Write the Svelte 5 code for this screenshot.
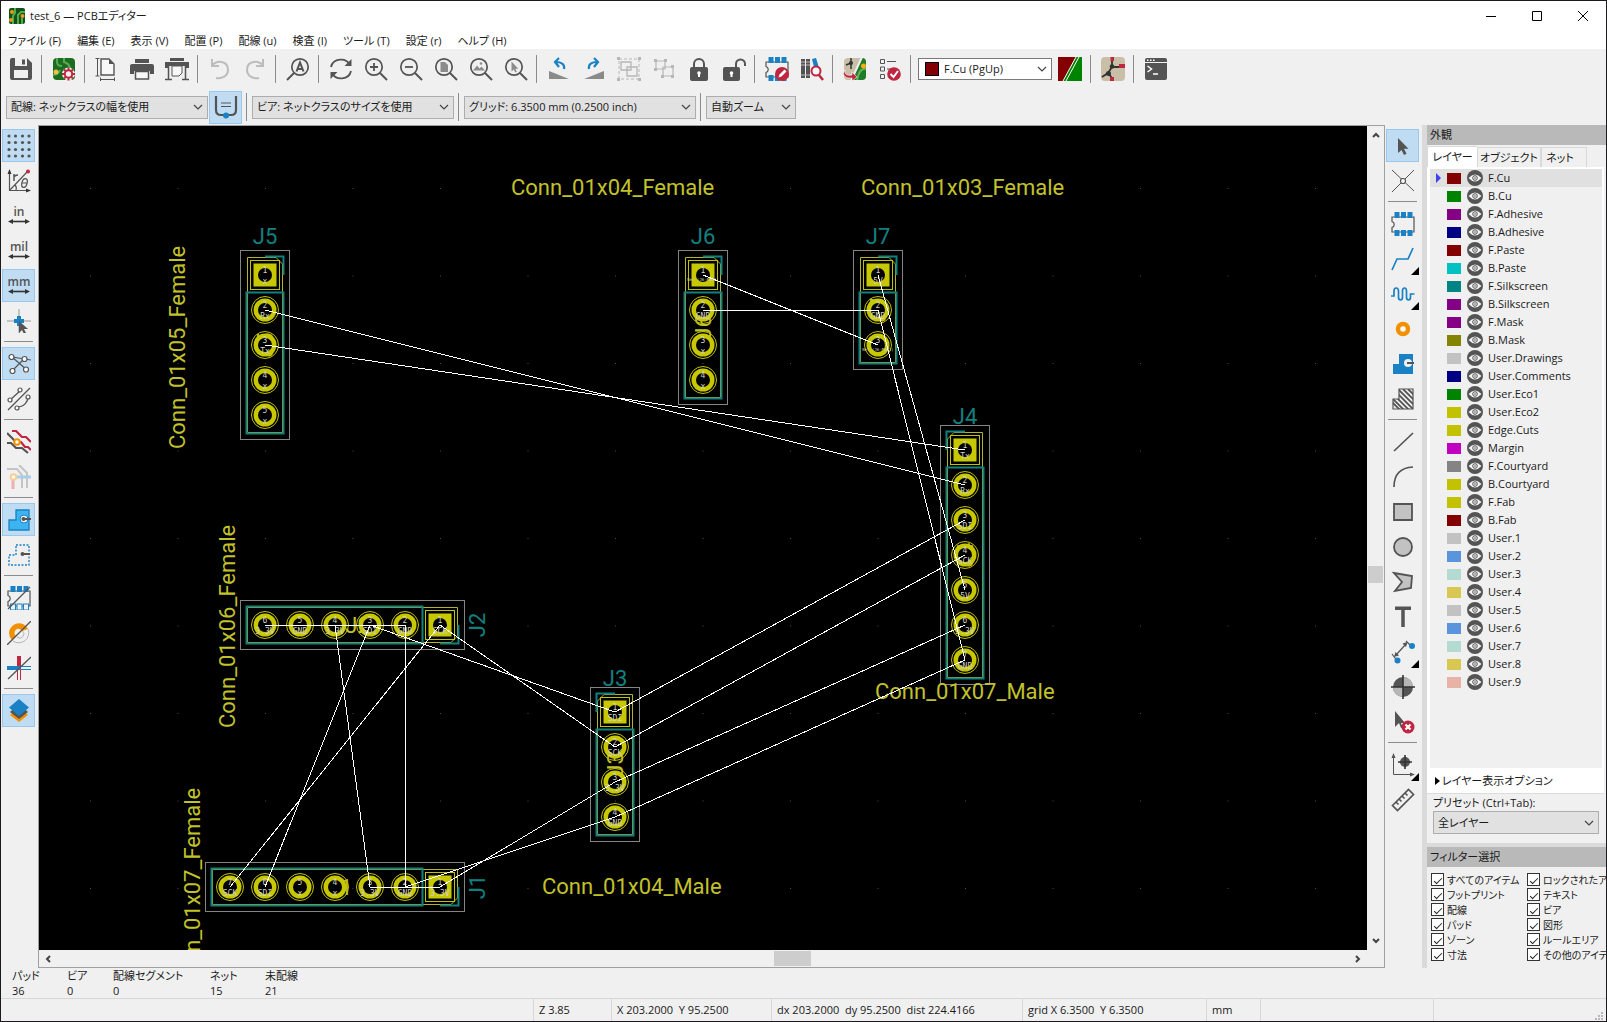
<script>
  const D = '#545454';
  const B = '#1a81c4';
  const R = '#bf2641';
  const O = '#f29100';
  const G = '#b6b6b6';

  const lens = `<circle cx="10" cy="10" r="8.2" fill="none" stroke="${D}" stroke-width="1.7"/><path d="M16 16l7 7" stroke="${D}" stroke-width="2"/>`;
  const chip = (y1, y2, hollow) =>
    `<path d="M1 5h22v15H1v-4.500c3-1 3-5 0-6z" fill="none" stroke="${D}" stroke-width="1.200"/>` +
    [3.5, 10, 16.5].map((x) => `<rect x="${x}" y="${y1}" width="5" height="6" fill="${B}"/><rect x="${x}" y="${y2}" width="5" height="6" fill="${hollow ? '#f0f0f0' : B}" stroke="${B}" stroke-width="${hollow ? 1 : 0}"/>`).join('');
  const unit = (t) => `<text x="12" y="12" text-anchor="middle" font-family="Open Sans, sans-serif" font-weight="600" font-size="12" fill="${D}">${t}</text><path d="M4 17.500h16" stroke="#333" stroke-width="1.600"/><path d="M1 17.500l5-2.500v5zM23 17.500l-5-2.500v5z" fill="#333"/>`;
  const boardBase = `<clipPath id="rb"><rect x="1" y="1" width="22" height="22" rx="4"/></clipPath>`;

  const icons = {
    save: `<path d="M1 3a2 2 0 0 1 2-2h15l5 5v15a2 2 0 0 1-2 2H3a2 2 0 0 1-2-2z" fill="${D}"/><path d="M6 1h12v8H6zM5 13h14v8H5z" fill="#f0f0f0"/><path d="M13 2.500h3v5h-3z" fill="${D}"/>`,
    setup: `${boardBase}<g clip-path="url(#rb)"><path d="M1 1h22v22H1z" fill="#1b6e20"/><path d="M5 0v5q0 4 5 4M12 0v5q6 2 6 7M1 18q5 0 7-5" stroke="#5aa854" stroke-width="2" fill="none"/><circle cx="4" cy="15" r="2.500" fill="#f2c040"/></g><circle cx="16.500" cy="17" r="6.500" fill="#f0f0f0"/><circle cx="16.500" cy="17" r="3.700" fill="none" stroke="${R}" stroke-width="2"/><path d="M16.500 10.500v3M16.500 20.500v3M10 17h3M20 17h3M12 12.500l2 2M19 19.500l2 2M21 12.500l-2 2M12 21.500l2-2" stroke="${R}" stroke-width="2"/>`,
    page: `<path d="M6 2h8l5 5v11H6z" fill="#f8f8f8" stroke="${D}" stroke-width="1.400"/><path d="M14 2v5h5z" fill="${D}"/><path d="M2.500 1v18M.500 1.500h4M.500 19h4M5 22.500h15M5.500 20.500v4M19.500 20.500v4" stroke="${D}" fill="none"/>`,
    print: `<path d="M5 2h14v4H5z" fill="${D}"/><path d="M0 9a2 2 0 0 1 2-2h20a2 2 0 0 1 2 2v8h-4v-3H4v3H0z" fill="${D}"/><path d="M5.500 14.500h13V22h-13z" fill="#f8f8f8" stroke="${D}" stroke-width="1.500"/>`,
    plot: `<path d="M5 1h14v3H5z" fill="${D}"/><path d="M0 5h24v6h-3V9H3v2H0z" fill="${D}"/><path d="M7 9h10v7l-3 3H7z" fill="#f8f8f8" stroke="${D}"/><path d="M3.500 9v13M20.500 9v13M0 22.500h7M17 22.500h7" stroke="${D}" stroke-width="1.500"/>`,
    undo: `<path d="M4 2v7h7M4 9C8 3 20 3 20 13c0 6-6 9-12 8" fill="none" stroke="#bcbcbc" stroke-width="2"/>`,
    redo: `<path d="M20 2v7h-7M20 9C16 3 4 3 4 13c0 6 6 9 12 8" fill="none" stroke="#bcbcbc" stroke-width="2"/>`,
    find: `<circle cx="14" cy="10" r="8.200" fill="none" stroke="${D}" stroke-width="1.700"/><path d="M8 16l-7 7" stroke="${D}" stroke-width="2"/><path d="M10.500 14.500L14 5.500l3.500 9M12 12h4" fill="none" stroke="${D}" stroke-width="2"/>`,
    refresh: `<path d="M2 10C4 1 17 0 21 8M22 14C20 23 7 24 3 16" fill="none" stroke="${D}" stroke-width="1.800"/><path d="M22.500 2v7h-7zM1.500 22v-7h7z" fill="${D}"/>`,
    zoomIn: `${lens}<path d="M10 6v8M6 10h8" stroke="${D}" stroke-width="1.800"/>`,
    zoomOut: `${lens}<path d="M6 10h8" stroke="${D}" stroke-width="1.800"/>`,
    zoomPage: `${lens}<path d="M6.500 5h4.500l3 3v7H6.500z" fill="#8c8c8c"/>`,
    zoomObjects: `${lens}<path d="M4 13.500l4-5 2.500 3 2-2 3.500 4z" fill="#8c8c8c"/><circle cx="12" cy="6.500" r="1.300" fill="#8c8c8c"/>`,
    zoomSelect: `${lens}<path d="M7.500 4.500v10l2.300-2 1.500 3 1.500-.700-1.400-3h3z" fill="#8c8c8c"/>`,
    rotL: `<path d="M2 14l20 8H2z" fill="#8a8a8a"/><path d="M17 12c1-5-3-7-8-7M12 1L8 5l4 5" fill="none" stroke="${B}" stroke-width="2.200"/>`,
    rotR: `<path d="M22 14L2 22h20z" fill="#8a8a8a"/><path d="M7 12c-1-5 3-7 8-7M12 1l4 4-4 5" fill="none" stroke="${B}" stroke-width="2.200"/>`,
    group: `<path d="M2 2h20v20H2z" fill="none" stroke="${G}" stroke-dasharray="3 2"/><path d="M4 5h10v8H4zM10 10h10v9H10z" fill="#f0f0f0" stroke="${G}" stroke-width="1.300"/><path d="M0 0h3v3H0zM21 0h3v3h-3zM0 21h3v3H0zM21 21h3v3h-3z" fill="${G}"/>`,
    ungroup: `<path d="M4 4h9v8H4zM11 10h10v9H11z" fill="#f0f0f0" stroke="${G}" stroke-width="1.200"/><path d="M2 2h3v3H2zM12 2h3v3h-3zM2 11h3v3H2zM19 8h3v3h-3zM9 18h3v3H9zM19 18h3v3h-3z" fill="${G}"/>`,
    lock: `<rect x="3" y="10" width="18" height="14" rx="2" fill="${D}"/><path d="M7 11V7a5 5 0 0 1 10 0v4" fill="none" stroke="${D}" stroke-width="2"/><circle cx="12" cy="16" r="1.800" fill="#fff"/><path d="M11 17h2v3h-2z" fill="#fff"/>`,
    unlock: `<rect x="1" y="10" width="17" height="14" rx="2" fill="${D}"/><path d="M14 11V7a4.500 4.500 0 0 1 9 0v2" fill="none" stroke="${D}" stroke-width="2"/><circle cx="9.500" cy="16" r="1.800" fill="#fff"/><path d="M8.500 17h2v3h-2z" fill="#fff"/>`,
    fpEdit: `${chip(0, 18, false)}<circle cx="17" cy="17" r="7" fill="${R}"/><path d="M13.500 20.500l1-3 5-5 2 2-5 5z" fill="#fff"/>`,
    library: `<path d="M1 2h4v19H1zM6 2h4v19H6z" fill="${D}"/><path d="M1 5h4M1 8h4M6 5h4M6 8h4M1 18h9" stroke="#bbb"/><path d="M12 2l4-1 4 13-4 4z" fill="${B}"/><circle cx="16" cy="14" r="4.500" fill="#f8f8f8" stroke="${R}" stroke-width="2"/><path d="M19 18l4 5" stroke="${R}" stroke-width="2.500"/>`,
    update: `${boardBase}<g clip-path="url(#rb)"><path d="M0 0h24v24H0z" fill="#c9bfa7"/><path d="M20 0h4v24H8z" fill="#1f7d28"/><path d="M19 0L8 24" stroke="#f0f0f0" stroke-width="2"/><path d="M8 0v6M8 6L3 8M8 6v6" stroke="#333" stroke-width="1.500"/><circle cx="8" cy="6" r="2" fill="#333"/><path d="M14 24q2-14 10-12" stroke="#68b060" stroke-width="2" fill="none"/><circle cx="20.500" cy="9" r="2.500" fill="#f2b010"/></g><path d="M2 13c-1 4 2 6 7 5v-3l5 5-5 4v-3C3 22-2 18 2 13z" fill="${R}" stroke="#fff" stroke-width=".6"/>`,
    drc: `<path d="M2.500 2.500h4v4h-4zM2.500 10h4v4h-4zM2.500 17.500h4v4h-4z" fill="none" stroke="${D}"/><path d="M9 4.500h9M9 12h4" stroke="${D}" stroke-width="1.200"/><circle cx="16" cy="17" r="6.800" fill="${R}"/><path d="M12.500 17l3 3 4.500-6" fill="none" stroke="#fff" stroke-width="2"/>`,
    pair: `<path d="M0 0h24v24H0z" fill="#008400"/><path d="M0 0h18L5 24H0z" fill="#840000"/><path d="M18 0L5 24M21 0L8 24" stroke="#fff"/>`,
    schematic: `<rect width="24" height="24" rx="4" fill="#c9bfa7"/><path d="M11 2v8M1 20l6-4 4-6h8M7 16l4 5" fill="none" stroke="#333" stroke-width="1.800"/><circle cx="11" cy="9.500" r="2.300" fill="#333"/><circle cx="7.500" cy="16.500" r="2.500" fill="#333"/><path d="M9.500 0h3.500v4H9.500zM18 7h6v4h-6zM9 20h4v4H9z" fill="${R}"/>`,
    console: `<rect x="1" y="1" width="22" height="22" rx="2" fill="${D}"/><path d="M1 5.500h22" stroke="#f0f0f0"/><path d="M3 3.200h1.500M6 3.200h1.500M9 3.200h1.500" stroke="#fff" stroke-width="1.500"/><path d="M3.500 9l4 3-4 3M9 17h5" fill="none" stroke="#fff" stroke-width="1.500"/>`,
    autoWidth: `<path d="M2 1v14q0 5 5 5h10q5 0 5-5V1" fill="none" stroke="${D}" stroke-width="2.200"/><path d="M7 8h10M7 11.500h10" stroke="${D}" stroke-width="1.200"/><circle cx="12" cy="20.500" r="3" fill="${B}"/>`,
    grid: [2, 8.500, 15.500, 22].map((y) => [2, 8.500, 15.500, 22].map((x) => `<circle cx="${x}" cy="${y}" r="1.600" fill="${D}"/>`).join('')).join(''),
    polar: `<path d="M2.500 2v19.500H22M2.500 21.500L20 3M8 16q2 2 1 5" fill="none" stroke="${D}" stroke-width="1.200"/><path d="M2.500 0L.500 5h4zM24 21.500l-5-2v4z" fill="#333"/><circle cx="21" cy="2.500" r="2" fill="${R}"/><path d="M7 5v7M7 8q1-2 4-2" stroke="${D}" stroke-width="1.500" fill="none"/><ellipse cx="17.500" cy="14" rx="2.600" ry="4.500" transform="rotate(15 17.500 14)" fill="none" stroke="${D}" stroke-width="1.300"/><path d="M15 14h5" stroke="${D}"/>`,
    inch: unit('in'),
    mil: unit('mil'),
    mm: unit('mm'),
    cursor: `<path d="M12 0v24M0 12h24" stroke="#999"/><path d="M10 7h4v3h3v4h-3v3h-4v-3H7v-4h3z" fill="${B}"/><path d="M12 12v12l3-3 2 4 2-1-2-4h4z" fill="${D}"/>`,
    rats: `<path d="M5 5l15 13M5 19L17 7M5 5l19 3" stroke="${D}" stroke-width="1.200"/><g fill="#fff" stroke="${D}" stroke-width="1.200"><circle cx="4.500" cy="5" r="2.500"/><circle cx="17.500" cy="7" r="2.500"/><circle cx="5.500" cy="19" r="2.500"/><circle cx="19" cy="17.500" r="2.500"/></g>`,
    curved: `<path d="M1 23L23 1M3 13l10-9M10 20c7 0 11-5 11-10" stroke="${D}" fill="none" stroke-width="1.300"/><g fill="#fff" stroke="${D}" stroke-width="1.200"><circle cx="3" cy="13" r="2"/><circle cx="13" cy="3" r="2"/><circle cx="10" cy="21" r="2"/><circle cx="21" cy="10" r="2"/></g>`,
    tracks: `<path d="M5 1h4l6 6h4l5 5M10 12h4l4 5h3l3 3" stroke="${R}" stroke-width="2.200" fill="none"/><path d="M0 3l8 8M0 13h4l5 5h6l6 5" stroke="${D}" stroke-width="2.200" fill="none"/><circle cx="10" cy="12" r="2.800" fill="#fff" stroke="${O}" stroke-width="2"/>`,
    tracksDim: `<path d="M0 4h7M12 0l8 8v15M6 4h4l5 6v13" fill="none" stroke="#c4c4c4" stroke-width="2"/><path d="M6 12v12" stroke="#eab0b8" stroke-width="3"/><path d="M9 12h15" stroke="#a9cde6" stroke-width="3"/><circle cx="6.500" cy="12" r="2.800" fill="#fff" stroke="#f8cf92" stroke-width="2"/>`,
    zoneFill: `<path d="M9 2h13v20H2V12h7z" fill="#3cb4f0" stroke="${B}" stroke-width="1.300"/><circle cx="17" cy="11" r="4" fill="#f0f0f0" stroke="${B}"/><path d="M16 11h8" stroke="${D}" stroke-width="2"/><circle cx="16.500" cy="11" r="2" fill="${D}"/>`,
    zoneLine: `<path d="M9 2h13v20H2V12h7z" fill="none" stroke="${B}" stroke-width="1.400" stroke-dasharray="2 1.500"/><path d="M16 11h7" stroke="${D}" stroke-width="2"/><circle cx="15.500" cy="11" r="2" fill="${D}"/>`,
    fpOutline: `${chip(0, 18, true)}<path d="M1 23L23 1" stroke="${D}" stroke-width="1.300"/>`,
    viaOutline: `<path d="M2 12a10 10 0 0 1 19-4L15 10a4 4 0 1 0-6 5l-4 4a10 10 0 0 1-3-7z" fill="${O}"/><path d="M21 8A10 10 0 0 1 6 20M15.500 10A4 4 0 0 1 10 16" stroke="${G}" fill="none"/><path d="M0 24L24 0" stroke="${D}" stroke-width="1.300"/>`,
    trackOutline: `<path d="M12 0v12" stroke="${R}" stroke-width="4"/><path d="M10.500 12v12M13.500 12v12" stroke="${R}"/><path d="M0 12h12" stroke="${B}" stroke-width="4"/><path d="M12 10.500h12M12 13.500h12" stroke="${B}"/><path d="M1 23L24 1" stroke="${D}" stroke-width="1.300"/>`,
    layers: `<path d="M12 8l9 8-9 7-9-7z" fill="${O}"/><path d="M12 5l9 8-9 7-9-7z" fill="${D}"/><path d="M12 0l10 8.500-10 8.500L2 8.500z" fill="${B}"/>`,
    select: `<path d="M7 4v15l3.500-3 2.500 5 2.500-1.200-2.500-5h4.500z" fill="${D}"/>`,
    ratLocal: `<path d="M1 1l22 21M23 1L1 23" stroke="${D}"/><circle cx="12" cy="12" r="2.500" fill="#fff" stroke="${D}" stroke-width="1.200"/>`,
    footprint: chip(0, 18, false),
    route: `<path d="M1 23l5-11h11l5-11" fill="none" stroke="${B}" stroke-width="1.700"/>`,
    tune: `<path d="M0 14h3V9q0-3 2.200-3T7.500 9v6q0 3 2 3t2-3V9q0-3 2-3t2 3v6q0 3 2 3t2-3v-3h4" fill="none" stroke="${B}" stroke-width="1.700"/>`,
    via: `<circle cx="12" cy="12" r="5" fill="#fff" stroke="${O}" stroke-width="4.500"/>`,
    zone: `<path d="M8 2h14v20H2V12h6z" fill="${B}"/><circle cx="17" cy="11" r="4" fill="#f0f0f0"/><path d="M16 11h7" stroke="${D}" stroke-width="2"/>`,
    ruleArea: `<clipPath id="ra"><path d="M8 2h14v20H2V12h6z"/></clipPath><path clip-path="url(#ra)" d="M-8 2l22 22M-3 2l22 22M2 2l22 22M7 2l18 18M12 2l12 12M17 2l7 7M-12 2l22 22" stroke="${D}" stroke-width="1.800"/><path d="M8 2h14v20H2V12h6z" fill="none" stroke="${D}" stroke-width="1.200"/>`,
    line: `<path d="M3 21L22 3" stroke="${D}" stroke-width="1.700"/>`,
    arc: `<path d="M3 22Q3 3 22 2" fill="none" stroke="${D}" stroke-width="1.700"/>`,
    rect: `<path d="M3 4h18v16H3z" fill="#c2c2c2" stroke="${D}" stroke-width="1.800"/>`,
    circle: `<circle cx="12" cy="12" r="9" fill="#c2c2c2" stroke="${D}" stroke-width="1.800"/>`,
    polygon: `<path d="M3 3l18 3-1 12-16 3 7-9z" fill="#c2c2c2" stroke="${D}" stroke-width="1.800"/>`,
    text: `<path d="M4 3.200h16M12 3.200V22" fill="none" stroke="${D}" stroke-width="3.500"/>`,
    dimension: `<path d="M1 14l6 8M15 1l6 6M5 15L15 4" stroke="${D}" stroke-width="1.200"/><path d="M3 17l1.500-5 3.500 3.500zM16.500 2l-5 1.500L15 7z" fill="${D}"/><circle cx="6.500" cy="20.500" r="3" fill="${B}"/><circle cx="21" cy="6" r="3" fill="${B}"/>`,
    origin: `<circle cx="12" cy="12" r="10" fill="${D}"/><path d="M12 2a10 10 0 0 1 10 10H12zM12 22A10 10 0 0 1 2 12h10z" fill="${G}"/><path d="M12 0v24M0 12h24" stroke="#333" stroke-width="1.600"/>`,
    erase: `<path d="M4 1v16l4-4 2 5h2l-2-5h4z" fill="${D}"/><circle cx="17" cy="17" r="6.500" fill="${R}"/><path d="M14.500 14.500l5 5M19.500 14.500l-5 5" stroke="#fff" stroke-width="2.200"/>`,
    gridOrigin: `<path d="M2.500 3v18.500H22" fill="none" stroke="${D}"/><path d="M2.500 0l-2 5h4zM24 21.500l-5-2v4z" fill="${D}"/><circle cx="14" cy="9" r="5" fill="${D}"/><path d="M14 2v14M7 9h14" stroke="#333" stroke-width="1.600"/>`,
    measure: `<path d="M1.500 17.500L17.500 1.500l5 5L6.500 22.500zM5 14l2.500 2.500M8 11l2.500 2.500M11 8l2.500 2.500M14 5l2.500 2.500" fill="none" stroke="${D}" stroke-width="1.700"/>`
  };

  const menus = ['ファイル (F)', '編集 (E)', '表示 (V)', '配置 (P)', '配線 (u)', '検査 (I)', 'ツール (T)', '設定 (r)', 'ヘルプ (H)'];
  const mainTools = [
    ['save'], ['setup'], ['page', 'print', 'plot'], ['undo', 'redo'], ['find'],
    ['refresh', 'zoomIn', 'zoomOut', 'zoomPage', 'zoomObjects', 'zoomSelect'],
    ['rotL', 'rotR', 'group', 'ungroup', 'lock', 'unlock'],
    ['fpEdit', 'library'], ['update', 'drc']
  ];
  const leftTools = [
    ['grid', 'polar', 'inch', 'mil', 'mm', 'cursor'], ['rats', 'curved'], ['tracks', 'tracksDim'],
    ['zoneFill', 'zoneLine'], ['fpOutline', 'viaOutline', 'trackOutline'], ['layers']
  ];
  const rightTools = [
    ['select', 'ratLocal'], ['footprint', 'route', 'tune', 'via', 'zone', 'ruleArea'],
    ['line', 'arc', 'rect', 'circle', 'polygon', 'text', 'dimension', 'origin', 'erase'],
    ['gridOrigin', 'measure']
  ];
  const pressed = ['grid', 'mm', 'rats', 'zoneFill', 'layers', 'select', 'autoWidth'];
  const flyout = ['route', 'tune', 'dimension', 'gridOrigin'];

  const layers = [
    ['F.Cu', '#840000'], ['B.Cu', '#008400'], ['F.Adhesive', '#840084'], ['B.Adhesive', '#000084'],
    ['F.Paste', '#840000'], ['B.Paste', '#00c2c2'], ['F.Silkscreen', '#008484'], ['B.Silkscreen', '#840084'],
    ['F.Mask', '#840084'], ['B.Mask', '#848400'], ['User.Drawings', '#c2c2c2'], ['User.Comments', '#000084'],
    ['User.Eco1', '#008400'], ['User.Eco2', '#c2c200'], ['Edge.Cuts', '#c2c200'], ['Margin', '#c200c2'],
    ['F.Courtyard', '#848484'], ['B.Courtyard', '#c2c200'], ['F.Fab', '#c2c200'], ['B.Fab', '#840000'],
    ['User.1', '#c2c2c2'], ['User.2', '#5994dc'], ['User.3', '#b4dbd2'], ['User.4', '#d8c852'],
    ['User.5', '#c2c2c2'], ['User.6', '#5994dc'], ['User.7', '#b4dbd2'], ['User.8', '#d8c852'], ['User.9', '#e8b2a7']
  ];
  const filters = [
    'すべてのアイテム', 'ロックされたアイテム', 'フットプリント', 'テキスト', '配線', 'ビア',
    'パッド', '図形', 'ゾーン', 'ルールエリア', '寸法', 'その他のアイテム'
  ];
  const counts = [['パッド', 36], ['ビア', 0], ['配線セグメント', 0], ['ネット', 15], ['未配線', 21]];
  const status = ['', 'Z 3.85', 'X 203.2000  Y 95.2500', 'dx 203.2000  dy 95.2500  dist 224.4166', 'grid X 6.3500  Y 6.3500', 'mm', '', ''];

  // Board drawing: pin pitch and connector origins are in canvas units.
  const P = 35;
  const parts = [
    { ref: 'J5', x: 226, y: 149, nets: ['x', 'Rx', 'Tx', 'x', 'x'] },
    { ref: 'J6', x: 664, y: 149, nets: ['Net-(J6-Pad1)', 'GND', 'x', 'x'] },
    { ref: 'J7', x: 839, y: 149, nets: ['5V', 'GND', 'Net-(J6-Pad1)'] },
    { ref: 'J4', x: 926, y: 324, male: true, nets: ['Tx', 'Rx', 'SDI', 'SCK', '5V', '3.3V', 'GND'] },
    { ref: 'J3', x: 576, y: 586, male: true, nets: ['SDI', 'SCK', '3.3V', 'GND'] },
    { ref: 'J2', x: 401, y: 499, flat: true, nets: ['SCK', 'GND', 'SDI', '3.3V', 'GND', '3.3V'] },
    { ref: 'J1', x: 401, y: 761, flat: true, nets: ['3.3V', 'GND', '3.3V', 'x', 'x', 'SDI', 'SCK'] }
  ];
  const values = [
    ['Conn_01x04_Female', 472, 69, 0], ['Conn_01x03_Female', 822, 69, 0],
    ['Conn_01x05_Female', 146, 323, -90], ['Conn_01x06_Female', 196, 602, -90],
    ['Conn_01x07_Female', 161, 865, -90], ['Conn_01x04_Male', 503, 768, 0], ['Conn_01x07_Male', 836, 573, 0]
  ];
  const rats = [
    'J5.2 J4.2', 'J5.3 J4.1', 'J6.1 J7.3', 'J6.2 J7.2', 'J7.1 J4.5', 'J7.2 J4.7', 'J3.1 J4.3', 'J3.2 J4.4',
    'J3.3 J4.6', 'J3.4 J4.7', 'J2.1 J3.2', 'J2.3 J3.1', 'J2.1 J1.7', 'J2.3 J1.6', 'J2.4 J1.3', 'J2.2 J1.2',
    'J2.2 J2.6', 'J1.3 J1.1', 'J1.2 J3.4', 'J1.1 J3.3'
  ];
  const pin = (name) => {
    const [ref, n] = name.split('.');
    const c = parts.find((p) => p.ref === ref);
    const d = (n - 1) * P;
    return c.flat ? [c.x - d, c.y] : [c.x, c.y + d];
  };
  const ratLines = rats.map((r) => r.split(' ').flatMap(pin));
</script>

{#snippet tool(name)}
  <button class="tool" class:on={pressed.includes(name)} class:fly={flyout.includes(name)} aria-label={name}>
    <svg width="24" height="24" viewBox="0 0 24 24">{@html icons[name]}</svg>
  </button>
{/snippet}

{#snippet combo(label, text, cls)}
  <div class="combo {cls}">
    <select aria-label={label}><option>{text}</option></select>
    <svg width="10" height="6" viewBox="0 0 10 6"><path d="M1 1l4 4 4-4" fill="none" stroke="#444" stroke-width="1.200" /></svg>
  </div>
{/snippet}

<div class="window">
  <header class="title">
    <svg width="16" height="16" viewBox="0 0 16 16">
      <rect width="16" height="16" rx="2" fill="#15501c" />
      <path d="M6 0v5l-2 3v8M16 4h-4L9 7v9M13 16v-6" stroke="#4fae4a" stroke-width="2" fill="none" />
      <circle cx="3" cy="4" r="2" fill="#e89a1c" /><circle cx="13.500" cy="8" r="2" fill="#e89a1c" /><circle cx="2" cy="12" r="2" fill="#e89a1c" />
    </svg>
    <h1>test_6 — PCBエディター</h1>
    <button class="win" aria-label="minimize"><svg width="10" height="10"><path d="M0 5.500h10" stroke="#000" /></svg></button>
    <button class="win" aria-label="maximize"><svg width="10" height="10"><path d="M.500.500h9v9h-9z" fill="none" stroke="#000" /></svg></button>
    <button class="win" aria-label="close"><svg width="10" height="10"><path d="M0 0l10 10M10 0L0 10" stroke="#000" /></svg></button>
  </header>

  <nav class="menu">
    {#each menus as m}<button>{m}</button>{/each}
  </nav>

  <div class="bar">
    {#each mainTools as group}
      {#each group as name}{@render tool(name)}{/each}
      <span class="sep"></span>
    {/each}
    <div class="layer-pick">
      {@render combo('layer', 'F.Cu (PgUp)', 'layer')}
      <span class="chip"></span>
    </div>
    {@render tool('pair')}
    <span class="sep"></span>
    {@render tool('schematic')}
    <span class="sep"></span>
    {@render tool('console')}
  </div>

  <div class="bar second">
    {@render combo('track width', '配線: ネットクラスの幅を使用', 'wide')}
    {@render tool('autoWidth')}
    <span class="sep"></span>
    {@render combo('via size', 'ビア: ネットクラスのサイズを使用', 'wide')}
    <span class="sep"></span>
    {@render combo('grid', 'グリッド: 6.3500 mm (0.2500 inch)', 'grid')}
    <span class="sep"></span>
    {@render combo('zoom', '自動ズーム', 'zoom')}
  </div>

  <main>
    <div class="side">
      {#each leftTools as group, i}
        {#if i}<span class="hsep"></span>{/if}
        {#each group as name}{@render tool(name)}{/each}
      {/each}
    </div>

    <div class="view">
      <svg class="board" width="100%" height="100%">
        <defs>
          <pattern id="dots" x="51" y="62" width="87.5" height="87.5" patternUnits="userSpaceOnUse">
            <rect width="1" height="1" fill="#4a4a4a" />
          </pattern>
        </defs>
        <rect width="100%" height="100%" fill="url(#dots)" />
        {#each parts as c}
          {@const n = c.nets.length}
          {@const end = (n - 1) * P}
          <g transform="translate({c.x} {c.y}) rotate({c.flat ? 90 : 0})" fill="none">
            <rect x="-24.500" y="-24.500" width="49" height={end + 49} stroke="#848484" shape-rendering="crispEdges" />
            <g transform="scale({c.male ? -1 : 1} 1)">
              <path d="M-17.500 {end + 17.500}V-17.500H11L17.500-11V{end + 17.500}z" stroke="#b4b428" />
              <path d="M-18.500 17.500h37V{end + 18.500}h-37zM0-18.500h18.500V0" stroke="#138080" stroke-width="2" />
            </g>
            <rect x="-14.500" y="-14.500" width="29" height="29" stroke="#c2c200" />
          </g>
          <text
            class="fabref"
            transform="translate({c.flat ? c.x - end / 2 + 5 : c.x + 8} {c.flat ? c.y + 8 : c.y + end / 2}) rotate({c.flat ? 0 : -90})"
            >{c.ref}</text
          >
          {#each c.nets as net, i}
            {@const px = c.flat ? c.x - i * P : c.x}
            {@const py = c.flat ? c.y : c.y + i * P}
            {#if i === 0}
              <rect x={px - 11.5} y={py - 11.5} width="23" height="23" fill="#c8c800" />
            {:else}
              <circle cx={px} cy={py} r="13.500" fill="none" stroke="#c2c200" />
              <circle cx={px} cy={py} r="11.500" fill="#c8c800" />
            {/if}
            <circle cx={px} cy={py} r="7" fill="#000" />
            <text class="pad" x={px} y={py - 2}>{i + 1}</text>
            <text class="pad" class:long={net.length > 5} x={px} y={py + (net.length > 5 ? 6 : 9)}>{net}</text>
          {/each}
          <text
            class="ref"
            transform="translate({c.flat ? c.x + 45 : c.x} {c.flat ? c.y : c.y - (c.male ? 26 : 31)}) rotate({c.flat ? -90 : 0})"
            >{c.ref}</text
          >
        {/each}
        {#each values as [t, x, y, a]}
          <text class="value" transform="translate({x} {y}) rotate({a})">{t}</text>
        {/each}
        {#each ratLines as [x1, y1, x2, y2]}
          <line {x1} {y1} {x2} {y2} stroke="#fff" shape-rendering="crispEdges" />
        {/each}
      </svg>
      <div class="scroll v">
        <svg width="8" height="6"><path d="M1 5l3-3 3 3" fill="none" stroke="#444" stroke-width="2" /></svg>
        <i class="thumb"></i>
        <svg width="8" height="6"><path d="M1 1l3 3 3-3" fill="none" stroke="#444" stroke-width="2" /></svg>
      </div>
      <div class="scroll h">
        <svg width="6" height="8"><path d="M5 1L2 4l3 3" fill="none" stroke="#444" stroke-width="2" /></svg>
        <i class="thumb"></i>
        <svg width="6" height="8"><path d="M1 1l3 3-3 3" fill="none" stroke="#444" stroke-width="2" /></svg>
      </div>
    </div>

    <div class="side">
      {#each rightTools as group, i}
        {#if i}<span class="hsep"></span>{/if}
        {#each group as name}{@render tool(name)}{/each}
      {/each}
    </div>

    <aside>
      <h2>外観</h2>
      <div class="tabs">
        <button class="active">レイヤー</button><button>オブジェクト</button><button>ネット</button>
      </div>
      <div class="book">
        <ul>
          {#each layers as [name, color], i}
            <li class:sel={i === 0}>
              <span class="mark"></span>
              <span class="sw" style:background={color}></span>
              <svg width="16" height="16" viewBox="0 0 16 16">
                <circle cx="8" cy="8" r="8" fill="#545454" />
                <path d="M1.500 8Q8 1 14.500 8 8 15 1.500 8z" fill="#f4f4f4" />
                <circle cx="8" cy="8" r="2.300" fill="#f4f4f4" stroke="#545454" /><circle cx="8" cy="8" r=".8" fill="#545454" />
              </svg>
              <span>{name}</span>
            </li>
          {/each}
        </ul>
        <button class="expand"><svg width="5" height="8"><path d="M0 0l5 4-5 4z" /></svg>レイヤー表示オプション</button>
      </div>
      <div class="preset">
        <label for="preset">プリセット (Ctrl+Tab):</label>
        <div class="combo">
          <select id="preset"><option>全レイヤー</option></select>
          <svg width="10" height="6" viewBox="0 0 10 6"><path d="M1 1l4 4 4-4" fill="none" stroke="#444" stroke-width="1.200" /></svg>
        </div>
      </div>
      <h2>フィルター選択</h2>
      <div class="filters">
        {#each filters as f}
          <label><input type="checkbox" checked />{f}</label>
        {/each}
      </div>
    </aside>
  </main>

  <dl class="info">
    {#each counts as [k, v]}<div><dt>{k}</dt><dd>{v}</dd></div>{/each}
  </dl>

  <footer>
    {#each status as s}<span>{s}</span>{/each}
    <svg width="9" height="9"><path d="M6 0h2v2H6zM3 3h2v2H3zM6 3h2v2H6zM0 6h2v2H0zM3 6h2v2H3zM6 6h2v2H6z" fill="#b8b8b8" /></svg>
  </footer>
</div>

<style>
  :global(body) {
    margin: 0;
    overflow: hidden;
  }
  .window {
    box-sizing: border-box;
    height: 100vh;
    display: flex;
    flex-direction: column;
    border: 1px solid #1c1a1e;
    background: #f0f0f0;
    color: #1a1a1a;
    font: 11px/14px 'Open Sans', 'Noto Sans CJK JP', sans-serif;
    font-feature-settings: 'palt';
  }
  button,
  select {
    font: inherit;
    font-feature-settings: inherit;
    color: inherit;
    padding: 0;
    border: 0;
    background: none;
  }
  svg {
    display: block;
    flex: none;
  }
  h1,
  h2 {
    margin: 0;
    font: inherit;
  }
  .title {
    display: flex;
    align-items: center;
    height: 29px;
    padding-left: 8px;
    background: #fff;
  }
  .title h1 {
    flex: 1;
    padding-left: 5px;
  }
  .win {
    display: grid;
    place-items: center;
    width: 46px;
    height: 28px;
  }
  .menu {
    box-sizing: border-box;
    display: flex;
    gap: 16px;
    height: 19px;
    padding: 2px 0 0 7px;
    background: #fff;
  }
  .menu button {
    white-space: nowrap;
  }
  .bar {
    display: flex;
    align-items: center;
    height: 40px;
    padding-left: 2px;
  }
  .bar.second {
    height: 34px;
    padding: 1px 0 1px 5px;
  }
  .tool {
    position: relative;
    display: grid;
    place-items: center;
    box-sizing: border-box;
    width: 33px;
    height: 33px;
    margin: 1px;
    border: 1px solid transparent;
    flex: none;
  }
  .tool.on {
    background: #bfdcf3;
    border-color: #98c8ee;
  }
  .tool.fly::after {
    content: '';
    position: absolute;
    right: -1px;
    bottom: -1px;
    border: 4px solid #000;
    border-left-color: transparent;
    border-top-color: transparent;
  }
  .sep {
    width: 1px;
    height: 28px;
    margin: 0 4px 0 3px;
    background: #8c8c8c;
    flex: none;
  }
  .combo {
    display: grid;
    align-items: center;
  }
  .combo > * {
    grid-area: 1 / 1;
  }
  .combo svg {
    justify-self: end;
    margin-right: 5px;
    pointer-events: none;
  }
  .combo select {
    appearance: none;
    box-sizing: border-box;
    width: 100%;
    height: 23px;
    padding: 0 4px;
    border: 1px solid #adadad;
    border-radius: 0;
    background: #e1e1e1;
  }
  .combo.wide {
    width: 202px;
  }
  .second .combo.grid {
    width: 232px;
  }
  .combo.zoom {
    width: 90px;
  }
  .second .sep {
    margin: 0 5px 0 4px;
  }
  .second .tool {
    margin: 0 0 0 1px;
  }
  .layer-pick {
    display: grid;
    align-items: center;
    margin: 0 0 0 3px;
  }
  .layer-pick > :global(*) {
    grid-area: 1 / 1;
  }
  .combo.layer {
    width: 134px;
  }
  .combo.layer select {
    height: 22px;
    padding-left: 25px;
    border-color: #7a7a7a;
    background: #fff;
  }
  .chip {
    box-sizing: border-box;
    width: 14px;
    height: 14px;
    margin-left: 7px;
    border: 1px solid #000;
    background: #840000;
    pointer-events: none;
  }
  main {
    flex: 1;
    min-height: 0;
    display: flex;
  }
  .side {
    display: flex;
    flex-direction: column;
    width: 35px;
    padding: 3px 2px 0 0;
    flex: none;
  }
  .hsep {
    height: 1px;
    margin: 3px 3px 4px;
    background: #8c8c8c;
    flex: none;
  }
  .view {
    flex: 1;
    min-width: 0;
    display: grid;
    grid-template: minmax(0, 1fr) 17px / minmax(0, 1fr) 17px;
    border: 1px solid #a0a0a0;
  }
  .board {
    background: #000;
    font-family: Roboto, sans-serif;
  }
  .value {
    font-size: 22px;
    fill: #c2c22a;
  }
  .ref {
    font-size: 22px;
    fill: #138080;
    text-anchor: middle;
  }
  .fabref {
    font-size: 22px;
    fill: #c2c22a;
    text-anchor: middle;
  }
  .pad {
    font-family: 'DejaVu Sans Mono', monospace;
    font-size: 8px;
    fill: #d2d2c4;
    text-anchor: middle;
  }
  .pad.long {
    font-size: 4px;
  }
  .scroll {
    display: flex;
    align-items: center;
    justify-content: space-between;
  }
  .scroll.v {
    flex-direction: column;
    padding: 6px 0;
  }
  .scroll.h {
    padding: 0 6px;
  }
  .thumb {
    background: #cdcdcd;
  }
  .v .thumb {
    width: 15px;
    height: 17px;
    margin-top: 72px;
  }
  .h .thumb {
    width: 37px;
    height: 15px;
    margin-left: 178px;
  }
  aside {
    width: 179px;
    display: flex;
    flex-direction: column;
    overflow: hidden;
    border-left: 5px solid #dadada;
    flex: none;
  }
  h2 {
    height: 20px;
    padding-left: 3px;
    background: #b9b9b9;
    line-height: 19px;
    flex: none;
  }
  .tabs {
    display: flex;
    align-items: flex-end;
    height: 22px;
    flex: none;
  }
  .tabs button {
    box-sizing: border-box;
    height: 20px;
    width: 46px;
    padding-right: 8px;
    border: 1px solid #d9d9d9;
    border-bottom: 0;
    white-space: nowrap;
  }
  .tabs button:nth-child(2) {
    width: 64px;
    padding: 0;
  }
  .tabs .active {
    width: 50px;
    height: 21px;
    padding: 0;
    background: #fff;
    border-right: 0;
  }
  .book {
    flex: 1;
    min-height: 0;
    display: flex;
    flex-direction: column;
    margin-right: 2px;
    padding: 2px 2px 0 3px;
    background: #fff;
    border-bottom: 1px solid #dcdcdc;
  }
  ul {
    flex: 1;
    min-height: 0;
    margin: 0;
    padding: 0;
    list-style: none;
    background: #f0f0f0;
  }
  li {
    display: flex;
    align-items: center;
    height: 18px;
  }
  li.sel {
    background: #e0e0e0;
  }
  .mark {
    width: 0;
    margin: 0 6px 0 6px;
    border: 5px solid transparent;
    border-right-width: 0;
  }
  .sel .mark {
    border-left-color: #4040f0;
  }
  .sw {
    width: 14px;
    height: 11px;
    margin-right: 6px;
  }
  li svg {
    margin-right: 5px;
  }
  .expand {
    display: flex;
    align-items: center;
    gap: 2px;
    height: 25px;
    padding-left: 5px;
    white-space: nowrap;
  }
  .preset {
    padding: 1px 7px 9px 6px;
    border-bottom: 4px solid #dadada;
  }
  .preset label {
    display: block;
    line-height: 16px;
  }
  .filters {
    display: grid;
    grid-template-columns: 96px 96px;
    grid-auto-rows: 15px;
    padding: 5px 0 6px 4px;
    font-size: 10px;
    flex: none;
  }
  .filters label {
    display: flex;
    align-items: center;
    gap: 3px;
    white-space: nowrap;
  }
  .filters input {
    appearance: none;
    display: grid;
    place-items: center;
    box-sizing: border-box;
    width: 13px;
    height: 13px;
    margin: 0;
    border: 1px solid #333;
    background: #fff;
    flex: none;
  }
  .filters input::before {
    content: '';
    width: 8px;
    height: 4px;
    box-sizing: border-box;
    border: solid #222;
    border-width: 0 0 1px 1px;
    transform: rotate(-45deg);
  }
  .info {
    display: flex;
    gap: 20px;
    height: 30px;
    margin: 0;
    padding-left: 11px;
    border-bottom: 1px solid #d7d7d7;
    line-height: 15px;
    white-space: nowrap;
  }
  .info div {
    min-width: 26px;
  }
  .info div:first-child {
    min-width: 35px;
  }
  .info div:nth-child(3) {
    min-width: 77px;
  }
  .info div:nth-child(4) {
    min-width: 35px;
  }
  .info dd {
    margin: 0;
  }
  footer {
    display: grid;
    grid-template-columns: 533px 78px 160px 251px 184px 54px 173px 1fr 11px;
    align-items: stretch;
    height: 22px;
    line-height: 22px;
    white-space: pre;
  }
  footer span {
    padding-left: 5px;
    border-right: 1px solid #d7d7d7;
  }
  footer span:nth-last-child(2) {
    border: 0;
  }
  footer svg {
    align-self: end;
  }
</style>
